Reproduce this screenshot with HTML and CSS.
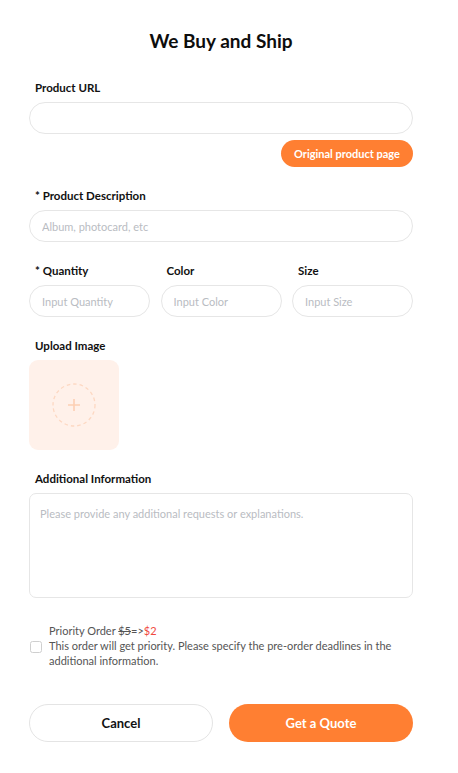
FILE: index.html
```html
<!DOCTYPE html>
<html>
<head>
<meta charset="utf-8">
<link rel="stylesheet" href="styles.css">
</head>
<body>
<div class="page">
  <h1 class="title">We Buy and Ship</h1>
  <form class="form">
    <div class="field">
      <label class="label">Product URL</label>
      <input class="input" type="text">
      <div class="link-row"><button type="button" class="btn-small">Original product page</button></div>
    </div>
    <div class="field">
      <label class="label">* Product Description</label>
      <input class="input" type="text" placeholder="Album, photocard, etc">
    </div>
    <div class="row3">
      <div class="field">
        <label class="label">* Quantity</label>
        <input class="input" type="text" placeholder="Input Quantity">
      </div>
      <div class="field">
        <label class="label">Color</label>
        <input class="input" type="text" placeholder="Input Color">
      </div>
      <div class="field">
        <label class="label">Size</label>
        <input class="input" type="text" placeholder="Input Size">
      </div>
    </div>
    <div class="field">
      <label class="label">Upload Image</label>
      <div class="upload">
        <svg width="46" height="46" viewBox="0 0 46 46">
          <circle cx="23" cy="23" r="21" fill="none" stroke="#FDD8C2" stroke-width="1.3" stroke-dasharray="3.5 3"/>
          <path d="M23 17v12M17 23h12" stroke="#FDCFB4" stroke-width="1.6"/>
        </svg>
      </div>
    </div>
    <div class="field">
      <label class="label">Additional Information</label>
      <textarea class="textarea" placeholder="Please provide any additional requests or explanations."></textarea>
    </div>
    <div class="priority">
      <span class="check"></span>
      <div class="ptext">
        <div>Priority Order <s>$5</s>=&gt;<span class="red">$2</span></div>
        <div>This order will get priority. Please specify the pre-order deadlines in the additional information.</div>
      </div>
    </div>
    <div class="actions">
      <button type="button" class="btn btn-cancel">Cancel</button>
      <button type="button" class="btn btn-quote">Get a Quote</button>
    </div>
  </form>
</div>
</body>
</html>
```
FILE: styles.css
```css
* { box-sizing: border-box; }
body {
  margin: 0;
  background: #fff;
  font-family: "Lato", "Noto Sans", sans-serif;
  color: #111;
}
.page {
  width: 384px;
  margin-left: 29px;
  padding-top: 28px;
}
.title {
  margin: 0;
  text-align: center;
  font-size: 19px;
  font-weight: 700;
  line-height: 26px;
  color: #0d0d0d;
}
.form {
  display: flex;
  flex-direction: column;
  margin-top: 27px;
}
.field {
  display: flex;
  flex-direction: column;
}
.label {
  font-size: 11.5px;
  font-weight: 700;
  line-height: 14px;
  padding-left: 6px;
  margin-bottom: 7px;
  color: #111;
}
.input {
  height: 32px;
  border: 1px solid #e6e6e6;
  border-radius: 16px;
  padding: 0 12px;
  font-family: inherit;
  font-size: 11px;
  outline: none;
  background: #fff;
}
.input::placeholder, .textarea::placeholder { color: #b9bcc2; }
.link-row {
  display: flex;
  justify-content: flex-end;
  margin-top: 6px;
}
.btn-small {
  height: 27px;
  width: 132px;
  border: none;
  border-radius: 14px;
  background: #FF7F32;
  color: #fff;
  font-family: inherit;
  font-size: 11px;
  font-weight: 700;
  padding: 0;
}
.form > .field + .field,
.form > .field + .row3,
.form > .row3 + .field {
  margin-top: 22px;
}
.row3 {
  display: grid;
  grid-template-columns: 121px 121px 121px;
  column-gap: 10.5px;
}
.upload {
  width: 90px;
  height: 90px;
  border-radius: 9px;
  background: #FFF1EA;
  display: flex;
  align-items: center;
  justify-content: center;
}
.textarea {
  height: 105px;
  border: 1px solid #e6e6e6;
  border-radius: 7px;
  padding: 13px 10px;
  font-family: inherit;
  font-size: 11px;
  resize: none;
  outline: none;
}
.priority {
  display: flex;
  align-items: center;
  gap: 7px;
  margin-top: 25px;
  padding-left: 1px;
  font-size: 11px;
  line-height: 15px;
  color: #555;
}
.check {
  width: 12px;
  height: 12px;
  border: 1px solid #cfcfcf;
  border-radius: 2.5px;
  flex: none;
  margin-top: 2px;
}
.ptext s { color: #555; }
.red { color: #f0493f; }
.actions {
  display: grid;
  grid-template-columns: 1fr 1fr;
  column-gap: 16px;
  margin-top: 36px;
}
.btn {
  height: 38px;
  border-radius: 19px;
  font-family: inherit;
  font-size: 13px;
  font-weight: 700;
}
.btn-cancel {
  border: 1px solid #e4e4e4;
  background: #fff;
  color: #111;
}
.btn-quote {
  border: none;
  background: #FF7F32;
  color: #fff;
}
```
